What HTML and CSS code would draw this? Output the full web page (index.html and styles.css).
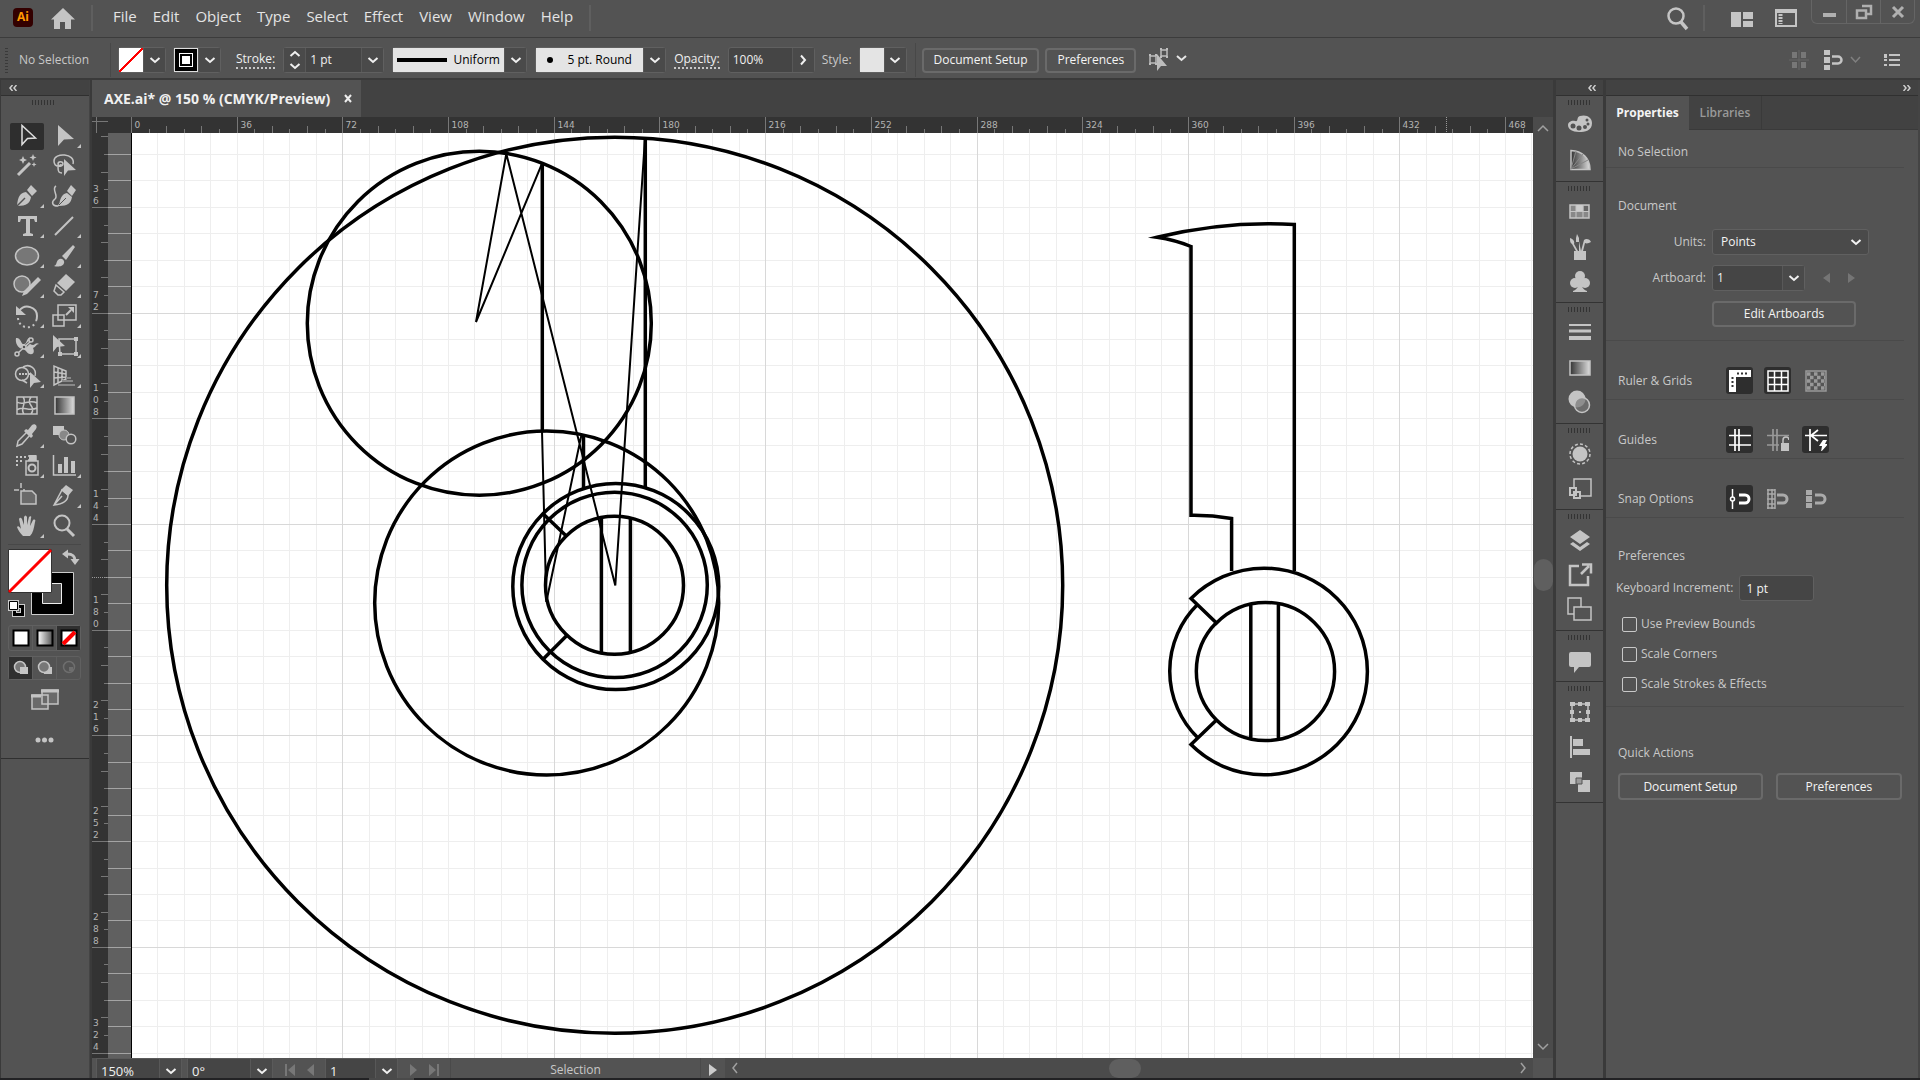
FILE: index.html
```html
<!DOCTYPE html>
<html lang="en">
<head>
<meta charset="utf-8">
<title>AXE.ai - Illustrator</title>
<link rel="stylesheet" href="styles.css">
</head>
<body>
<svg class="defs" width="0" height="0" aria-hidden="true">
  <defs>
    <linearGradient id="fade"><stop offset="0" stop-color="#333"/><stop offset="1" stop-color="#ddd"/></linearGradient>
    <linearGradient id="fade-light"><stop offset="0" stop-color="#fff"/><stop offset="1" stop-color="#555"/></linearGradient>
    <symbol id="down" viewBox="0 0 12 12"><path d="M1.500 4l4.500 4 4.500-4" fill="none" stroke="currentColor" stroke-width="2"/></symbol>
    <symbol id="next" viewBox="0 0 12 12"><path d="M4 1.500l4 4.500-4 4.500" fill="none" stroke="currentColor" stroke-width="2"/></symbol>
    <symbol id="magnet" viewBox="0 0 22 22"><path d="M10 7h6a4 4 0 0 1 0 8H10" fill="none" stroke="currentColor" stroke-width="3"/></symbol>
  </defs>
</svg>
<div class="app">
  <header class="titlebar">
    <span class="logo">Ai</span>
    <button class="icon-btn home" aria-label="Home"><svg width="24" height="22"><path d="M12 0L0 11.500h3V21h6v-7h5v7h6v-9.500h4z" fill="#c4c4c4"/></svg></button>
    <span class="bar"></span>
    <nav class="menu">
      <a href="#">File</a><a href="#">Edit</a><a href="#">Object</a><a href="#">Type</a><a href="#">Select</a><a href="#">Effect</a><a href="#">View</a><a href="#">Window</a><a href="#">Help</a>
    </nav>
    <span class="bar"></span>
    <span class="grow"></span>
    <button class="icon-btn search" aria-label="Search"><svg width="22" height="26"><circle cx="9" cy="11" r="7.500" fill="none" stroke="#c4c4c4" stroke-width="2.500"/><path d="M14 17l6 7" stroke="#c4c4c4" stroke-width="3.500"/></svg></button>
    <span class="bar"></span>
    <button class="icon-btn arrange" aria-label="Arrange documents"><svg width="22" height="15"><path d="M0 0h10v15H0zM12 0h10v7H12zM12 9h10v6H12z" fill="#c4c4c4"/></svg></button>
    <button class="icon-btn switcher" aria-label="Workspace"><svg width="22" height="18"><path d="M1 3v14h20V3z" fill="none" stroke="#c4c4c4" stroke-width="2"/><path d="M0 0h22v3H0z" fill="#c4c4c4"/><path d="M5.500 5v10" stroke="#c4c4c4" stroke-width="4" stroke-dasharray="2 1"/></svg></button>
    <div class="window-btns">
      <button aria-label="Minimize"><svg width="14" height="16"><path d="M1 9h13v4H1z" fill="#b0b0b0"/></svg></button>
      <button aria-label="Restore"><svg width="18" height="16"><path d="M7 2h9v8h-5M2 6.500h9v7.500H2z" fill="none" stroke="#b0b0b0" stroke-width="2.500"/></svg></button>
      <button aria-label="Close"><svg width="14" height="14"><path d="M2 2l10 10M12 2L2 12" stroke="#b0b0b0" stroke-width="3"/></svg></button>
    </div>
  </header>

  <div class="control">
    <span class="vgrip"></span>
    <span class="state">No Selection</span>
    <div class="combo fill"><button class="chip none" aria-label="Fill"></button><button class="drop" aria-label="Fill options"><svg><use href="#down"/></svg></button></div>
    <div class="combo stroke-c"><button class="chip solid" aria-label="Stroke"></button><button class="drop" aria-label="Stroke options"><svg><use href="#down"/></svg></button></div>
    <label class="dotted" for="stroke-w">Stroke:</label>
    <div class="combo weight"><button class="drop step" aria-label="Step"><svg class="spin" viewBox="0 0 12 24"><path d="M1.500 8L6 4l4.500 4M1.500 16L6 20l4.500-4" fill="none" stroke="currentColor" stroke-width="2"/></svg></button><input id="stroke-w" value="1 pt"><button class="drop" aria-label="Weights"><svg><use href="#down"/></svg></button></div>
    <div class="combo"><button class="profile"><span class="sample"></span>Uniform</button><button class="drop" aria-label="Profiles"><svg><use href="#down"/></svg></button></div>
    <div class="combo"><button class="profile brush"><span class="dot"></span>5 pt. Round</button><button class="drop" aria-label="Brushes"><svg><use href="#down"/></svg></button></div>
    <label class="dotted" for="opacity">Opacity:</label>
    <div class="combo opacity"><input id="opacity" value="100%"><button class="drop" aria-label="Opacity options"><svg><use href="#next"/></svg></button></div>
    <span class="style-l">Style:</span>
    <div class="combo"><button class="chip" aria-label="Graphic style"></button><button class="drop" aria-label="Styles"><svg><use href="#down"/></svg></button></div>
    <span class="sep"></span>
    <button class="btn">Document Setup</button>
    <button class="btn">Preferences</button>
    <button class="icon-btn similar" aria-label="Select similar objects"><svg width="42" height="26" fill="none" stroke="#bdbdbd"><path d="M2 9h6v7H2zM13 3h6v6h-6z" stroke-width="1.500"/><path d="M1 8h2M7 8h2M1 17h2M7 17h2M12 2h2M18 2h2M12 10h2M18 10h2" stroke-width="2"/><path d="M9 7v17l4-5h6z" fill="#bdbdbd" stroke="none"/><path d="M29 9l4.500 4L38 9" stroke="#e6e6e6" stroke-width="2"/></svg></button>
    <span class="grow"></span>
    <button class="icon-btn align" aria-label="Align to pixel grid"><svg width="20" height="22" fill="#777"><path d="M3 3h5v6H3zM12 3h5v6h-5zM3 13h5v6H3zM12 13h5v6h-5z"/><path d="M10 1v20M0 11h20" stroke="#666"/></svg></button>
    <button class="icon-btn snap" aria-label="Snap to pixel"><svg width="40" height="22"><path d="M1 1h6v5H1zM1 8h6v6H1zM1 16h6v5H1z" fill="#c4c4c4"/><path d="M9 7.500h6a3.500 3.500 0 0 1 0 7H9" fill="none" stroke="#c4c4c4" stroke-width="2.500"/><path d="M28 8l4.500 5L37 8" fill="none" stroke="#808080" stroke-width="1.500"/></svg></button>
    <button class="icon-btn list" aria-label="Panel menu"><svg width="16" height="14"><path d="M0 2h3M5 2h11M0 7h3M5 7h11M0 12h3M5 12h11M0 4h3" stroke="#c4c4c4" stroke-width="2"/></svg></button>
  </div>

  <main class="work">
    <aside class="tools">
      <div class="collapse"><svg width="8" height="6"><path d="M3.500 0L1 3l2.500 3M7.500 0L5 3l2.500 3" fill="none" stroke="#d0d0d0" stroke-width="1.500"/></svg></div>
      <div class="grip"></div>
      <div class="tool-grid">
        <button class="active" aria-label="Selection"><svg><path d="M8 2.500v19l5.500-6 8-.5z" fill="none" stroke="#e0e0e0" stroke-width="1.500"/></svg></button>
        <button class="more" aria-label="Direct selection"><svg><path d="M7 2v21l6-6.500 10-.5z" fill="currentColor"/></svg></button>
        <button aria-label="Magic wand"><svg><path d="M4 22L16 10" stroke="currentColor" stroke-width="3"/><path d="M9 3l1.200 2.800L13 7l-2.800 1.200L9 11 7.800 8.200 5 7l2.800-1.200zM19 1l1 2.500 2.500 1-2.500 1-1 2.500-1-2.500-2.500-1 2.500-1zM20 9l.7 1.800 1.800.7-1.800.7L20 14l-.7-1.800-1.800-.7 1.800-.7z" fill="currentColor"/></svg></button>
        <button aria-label="Lasso"><svg><path d="M22 11c3-11-19-12-19-3 0 7 9 6 9 3s-5-3-5 0c0 2 3 2 3 0M7 14c0 5 1 6 4 6" fill="none" stroke="currentColor" stroke-width="1.500"/><path d="M13 6v17l4-5.500 8-.5z" fill="currentColor"/></svg></button>
        <button class="more" aria-label="Pen"><svg><path d="M3 23c1-10 3-13 9-14l5 5c-1 6-4 9-14 9zM13 7l4-5 6 6-5 5z" fill="currentColor"/><path d="M3 23l8-8" stroke="#535353" stroke-width="1.500"/></svg></button>
        <button aria-label="Curvature"><svg><path d="M8 23c1-8 3-12 8-13l5 4c-1 6-4 9-13 9zM16 8l4-6 5 5-4 6z" fill="currentColor"/><path d="M5 3c-5 3 3 10-1 13-4 3-3 7 3 7M7 23l8-8" fill="none" stroke="currentColor" stroke-width="1.500"/><path d="M8 22l7-7" stroke="#535353"/></svg></button>
        <button class="more" aria-label="Type"><svg><path d="M4 3h19v6h-2l-1-3h-4v14l3 1v2H9v-2l3-1V6H7L6 9H4z" fill="currentColor"/></svg></button>
        <button class="more" aria-label="Line"><svg><path d="M4 22L22 4" stroke="currentColor" stroke-width="2"/></svg></button>
        <button class="more" aria-label="Ellipse"><svg><ellipse cx="13" cy="13" rx="11.500" ry="9" fill="#777" stroke="currentColor" stroke-width="1.500"/></svg></button>
        <button class="more" aria-label="Paintbrush"><svg><path d="M11 13L22 2l2 2-9 13zM3 23c3-1 2-4 4-6 3-3 7 0 6 3-1 4-7 4-10 3z" fill="currentColor"/></svg></button>
        <button class="more" aria-label="Shaper"><svg><circle cx="8" cy="11" r="8" fill="#777" stroke="currentColor" stroke-width="1.500"/><path d="M24 4l3 3-14 14-5 2 2-5z" fill="currentColor"/></svg></button>
        <button class="more" aria-label="Eraser"><svg><path d="M15 1l9 8-9 9-9-8z" fill="currentColor"/><path d="M5 12l8 7-3 3H7l-4-4z" fill="none" stroke="currentColor" stroke-width="1.500"/></svg></button>
        <button class="more" aria-label="Rotate"><svg><path d="M5 8c6-8 18-4 18 5 0 2 0 3-1 5" fill="none" stroke="currentColor" stroke-width="2"/><path d="M2 3v9h10z" fill="currentColor"/><path d="M4 15c1 11 14 12 18 4" fill="none" stroke="currentColor" stroke-width="2" stroke-dasharray="2 3"/></svg></button>
        <button class="more" aria-label="Scale"><svg><path d="M7 2h18v15H7zM2 12h11v11H2z" fill="none" stroke="currentColor" stroke-width="1.500"/><path d="M15 12l5-5" stroke="currentColor" stroke-width="2"/><path d="M17 4h6v6z" fill="currentColor"/></svg></button>
        <button class="more" aria-label="Width"><svg><path d="M2 5c5-1 5 7 8 6 3 0 2-5 6-7-2 5 0 8 3 8 2 0 3-3 6-1-3 0-3 3-6 4 2 4 0 7-3 6-3 0-4-5-8-5-4-1-7-6-6-11z" fill="currentColor"/><path d="M3 21L18 7" stroke="#535353" stroke-width="3"/><path d="M4 20L17 8" stroke="currentColor" stroke-width="1.500"/><g fill="#535353" stroke="currentColor" stroke-width="1.500"><circle cx="3" cy="21" r="2"/><circle cx="17" cy="7" r="2"/><circle cx="10" cy="14" r="2"/></g></svg></button>
        <button class="more" aria-label="Free transform"><svg><path d="M8 6h17v15H9z" fill="none" stroke="currentColor" stroke-width="1.500"/><path d="M23 4h4v4h-4zM23 19h4v4h-4zM7 19h4v4H7z" fill="currentColor"/><path d="M2 2v17l4-5 8-1z" fill="currentColor"/></svg></button>
        <button class="more" aria-label="Shape builder"><svg><circle cx="8" cy="11" r="6.500" fill="none" stroke="currentColor" stroke-width="1.500"/><path d="M9 4c7-4 14 2 12 9M8 17l5 3" fill="none" stroke="currentColor" stroke-width="1.500"/><path d="M5 11h12" stroke="currentColor" stroke-width="2" stroke-dasharray="2 1"/><path d="M16 9v16l4-5 7-1z" fill="currentColor"/></svg></button>
        <button class="more" aria-label="Perspective grid"><svg><path d="M3 3v19l12-6V8zM7 5v15M11 7v11M3 9l12 2M3 15l12-1" fill="none" stroke="currentColor" stroke-width="1.500"/><path d="M15 15h5M11 18h11M7 22h17" stroke="#888" stroke-width="2"/></svg></button>
        <button aria-label="Mesh"><svg><path d="M3 4h20v17H3zM3 9c6 4 12-3 20 1M3 17c5-5 12 2 20-2M9 4c5 6-4 11 1 17M17 4c-6 8 6 9 0 17" fill="none" stroke="currentColor" stroke-width="1.500"/></svg></button>
        <button aria-label="Gradient"><svg><path d="M4 4h19v17H4z" fill="url(#fade)" stroke="currentColor" stroke-width="1.500"/></svg></button>
        <button class="more" aria-label="Eyedropper"><svg><path d="M14 7l4-5c3-2 6 1 4 4l-4 5 1 2-2 2-7-7 2-2z" fill="currentColor"/><path d="M13 9L4 18l-1 5 5-2 8-9" fill="none" stroke="currentColor" stroke-width="1.500"/></svg></button>
        <button aria-label="Blend"><svg><path d="M2 3h11v9H2z" fill="currentColor"/><circle cx="13" cy="12" r="5" fill="#888" stroke="currentColor"/><circle cx="20" cy="16" r="4.800" fill="#535353" stroke="currentColor" stroke-width="1.500"/></svg></button>
        <button class="more" aria-label="Symbol sprayer"><svg><path d="M12 8h12v14H12zM14 3h8v4h-8" fill="none" stroke="currentColor" stroke-width="1.500"/><path d="M15 2h7v5h-7z" fill="currentColor"/><circle cx="18" cy="15" r="3.500" fill="none" stroke="currentColor" stroke-width="2"/><path d="M2 4h10M2 8h8M2 12h4" stroke="currentColor" stroke-width="2" stroke-dasharray="2 2"/></svg></button>
        <button class="more" aria-label="Column graph"><svg><path d="M2.500 2v20H25" fill="none" stroke="currentColor" stroke-width="1.500"/><path d="M7 11h4v9H7zM13 4h4v16h-4zM20 8h4v12h-4z" fill="currentColor"/></svg></button>
        <button aria-label="Artboard"><svg><path d="M7 8h11l4 4v9H7z" fill="#6a6a6a" stroke="currentColor" stroke-width="1.500"/><path d="M0 7h5M7 0v5M9 7h2" stroke="currentColor" stroke-width="1.500"/></svg></button>
        <button class="more" aria-label="Slice"><svg><path d="M3 22l8-15 6 5c0 5-4 9-14 10zM3 22l8-9" fill="none" stroke="currentColor" stroke-width="1.500"/><path d="M15 2l7 5-5 6-7-6z" fill="currentColor"/></svg></button>
        <button class="more" aria-label="Hand"><svg><path d="M9 23c-3-3-5-6-6-9 1-2 3 0 4 2L5 6c1-2 2-1 3 0l2 6V4c1-2 2-2 3 0v8l2-8c1-1 3-1 2 1l-1 8 3-6c2-1 3 0 2 2-1 6-2 11-5 14z" fill="currentColor"/></svg></button>
        <button aria-label="Zoom"><svg><circle cx="11" cy="10" r="7.500" fill="none" stroke="currentColor" stroke-width="2"/><path d="M16 16l7 7" stroke="currentColor" stroke-width="3"/></svg></button>
      </div>
      <div class="swatches">
        <svg width="74" height="72">
          <path d="M23.500 23.500h42v42h-42z" fill="#000" stroke="#ccc"/><path d="M34.500 34.500h19v20h-19z" fill="#535353" stroke="#eee"/>
          <path d="M.5.500h43v43H.5z" fill="#fff" stroke="#333"/><path d="M1 43L43 1" stroke="#f00" stroke-width="3"/>
          <path d="M59 5c6 0 8 2 8 7" fill="none" stroke="#c4c4c4" stroke-width="3"/><path d="M54 5l6-4.500v9zM62.500 10h9L67 16z" fill="#c4c4c4"/>
          <path d="M6.500 57.500h8v8h-8z" fill="none" stroke="#ccc" stroke-width="5"/><path d="M6.500 57.500h8v8h-8z" fill="none" stroke="#000" stroke-width="3"/><path d="M1.500 52.500h8v8h-8z" fill="#fff" stroke="#ccc" stroke-width="3"/><path d="M1.500 52.500h8v8h-8z" fill="#fff" stroke="#000"/>
        </svg>
      </div>
      <div class="seg">
        <button aria-label="Color"><svg width="18" height="18"><path d="M1.500 1.500h15v15h-15z" fill="#fff" stroke="#000" stroke-width="2"/></svg></button>
        <button aria-label="Gradient fill"><svg width="18" height="18"><path d="M1.500 1.500h15v15h-15z" fill="url(#fade-light)" stroke="#000" stroke-width="2"/></svg></button>
        <button class="on" aria-label="None"><svg width="18" height="18"><path d="M1.500 1.500h15v15h-15z" fill="#fff" stroke="#000" stroke-width="2"/><path d="M3 15L15 3" stroke="#f00" stroke-width="4"/></svg></button>
      </div>
      <div class="seg modes">
        <button class="on" aria-label="Draw normal"><svg width="16" height="16"><circle cx="7" cy="7" r="5.500" fill="#777" stroke="#c4c4c4" stroke-width="1.500"/><path d="M7 7h8v7H7z" fill="#c4c4c4"/></svg></button>
        <button aria-label="Draw behind"><svg width="16" height="16"><path d="M7 7h8v7H7z" fill="#c4c4c4"/><circle cx="7" cy="7" r="5.500" fill="#777" stroke="#c4c4c4" stroke-width="1.500"/></svg></button>
        <button aria-label="Draw inside"><svg width="16" height="16"><circle cx="8" cy="7" r="5.500" fill="none" stroke="#6e6e6e" stroke-width="1.500"/><path d="M8 7h4v4H8z" fill="#6e6e6e"/></svg></button>
      </div>
      <button class="icon-btn screen" aria-label="Screen mode"><svg width="29" height="22"><path d="M1 6h16v14H1zM11 1h16v14H11z" fill="#6a6a6a" stroke="#c4c4c4" stroke-width="1.500"/><path d="M0 7h10M10 2h18" stroke="#c4c4c4" stroke-width="3"/></svg></button>
      <button class="icon-btn dots" aria-label="Edit toolbar"><svg width="19" height="6" fill="#c4c4c4"><circle cx="3" cy="3" r="2.500"/><circle cx="9.500" cy="3" r="2.500"/><circle cx="16" cy="3" r="2.500"/></svg></button>
      <hr>
    </aside>

    <section class="doc">
      <div class="tabs"><div class="tab"><span>AXE.ai* @ 150 % (CMYK/Preview)</span><button class="close" aria-label="Close document"><svg width="8" height="9"><path d="M1 1l6 7M7 1L1 8" stroke="#eee" stroke-width="2"/></svg></button></div></div>
      <div class="view">
        <svg class="corner"><path d="M0 4.500h16M4.500 0v16" stroke="#777"/></svg>
        <svg class="ruler" id="ruler-x"></svg>
        <svg class="ruler" id="ruler-y"></svg>
        <svg class="canvas">
          <rect x="24" y="0" width="100%" height="100%" fill="#fff"/>
          <g id="grid" shape-rendering="crispEdges"></g>
          <path d="M23.500 0v2000" stroke="#000"/>
          <g transform="translate(-108 -133)" fill="none" stroke="#000" stroke-width="3.500" stroke-miterlimit="10">
            <circle cx="614.700" cy="585.200" r="448"/>
            <circle cx="479.300" cy="323.300" r="172"/>
            <circle cx="546.700" cy="603" r="172"/>
            <circle cx="615.800" cy="586.500" r="103"/>
            <circle cx="614.600" cy="584.900" r="92.700"/>
            <circle cx="614.500" cy="585.200" r="69"/>
            <path d="M542.300 163.500V431M645.300 138v349.500M583.500 434.500v54M601.400 518v134M630.400 518v134"/>
            <path d="M543.300 514l23 22M543.300 659l23-23"/>
            <path d="M542 163.600L476 322l30.300-168.300L615.300 585.400 645 138.500M542 431l4.300 171 35.200-167.400" stroke-width="2" stroke-linejoin="bevel"/>
            <path d="M1231.600 571v-52.500Q1211 515 1191 515.300V246.500Q1175 240 1157 237.300 1226 220.500 1294.300 224.500V571"/>
            <path d="M1191 598.500a103.300 103.300 0 1 1 0 146l25.500-24.500a69 69 0 1 0 0-97zM1197.500 604.500a93.500 93.500 0 0 0 0 133M1216.500 622.500a69 69 0 0 0 0 97.500M1250.800 603v136M1278.400 603v136"/>
          </g>
        </svg>
        <div class="vscroll"><svg width="12" height="12"><path d="M1 9l5-5 5 5" fill="none" stroke="#a0a0a0" stroke-width="1.500"/></svg><span class="thumb"></span><svg width="12" height="12"><path d="M1 3l5 5 5-5" fill="none" stroke="#a0a0a0" stroke-width="1.500"/></svg></div>
      </div>
      <div class="status">
        <div class="combo zoom"><input aria-label="Zoom" value="150%"><button class="drop" aria-label="Zoom levels"><svg><use href="#down"/></svg></button></div>
        <div class="combo zoom"><input aria-label="Rotate view" value="0°"><button class="drop" aria-label="Rotations"><svg><use href="#down"/></svg></button></div>
        <div class="nav"><button class="icon-btn" aria-label="First"><svg width="12" height="12"><path d="M1 0h2v12H1zM11 0v12L4 6z" fill="#777"/></svg></button><button class="icon-btn" aria-label="Previous"><svg width="8" height="12"><path d="M7 0v12L0 6z" fill="#777"/></svg></button></div>
        <div class="combo page"><input aria-label="Artboard number" value="1"><button class="drop" aria-label="Artboards"><svg><use href="#down"/></svg></button></div>
        <div class="nav"><button class="icon-btn" aria-label="Next"><svg width="8" height="12"><path d="M1 0v12l7-6z" fill="#777"/></svg></button><button class="icon-btn" aria-label="Last"><svg width="12" height="12"><path d="M9 0h2v12H9zM1 0v12l7-6z" fill="#777"/></svg></button></div>
        <span class="tool-name">Selection</span>
        <button class="icon-btn play" aria-label="Status menu"><svg width="8" height="12"><path d="M0 0v12l8-6z" fill="#ccc"/></svg></button>
        <div class="hscroll"><svg width="12" height="12"><path d="M8 1L4 6l4 5" fill="none" stroke="#a0a0a0" stroke-width="1.500"/></svg><span class="thumb"></span><svg width="12" height="12"><path d="M4 1l4 5-4 5" fill="none" stroke="#a0a0a0" stroke-width="1.500"/></svg></div>
      </div>
    </section>

    <aside class="dock">
      <div class="collapse"><svg width="8" height="6"><path d="M3.500 0L1 3l2.500 3M7.500 0L5 3l2.500 3" fill="none" stroke="#d0d0d0" stroke-width="1.500"/></svg></div>
      <div class="group">
        <button aria-label="Color"><svg><path d="M13 3c7-2 12 2 12 7 0 8-7 9-13 9C5 19 1 16 1 12c0-3 4-5 7-4 4 1 1-4 5-5z" fill="currentColor"/><g fill="#535353"><circle cx="6" cy="13" r="2.500"/><circle cx="12" cy="15" r="2.500"/><circle cx="18" cy="14" r="2"/><circle cx="21" cy="11" r="1.500"/><circle cx="20" cy="7" r="1.500"/></g></svg></button>
        <button aria-label="Color guide"><svg><path d="M4 2.500v19h19C23 10 15 3 4 2.500z" fill="url(#fade)" stroke="currentColor" stroke-width="1.500"/><path d="M4 21L9 3M4 21l12-15M4 21l17-9" stroke="#888"/></svg></button>
      </div>
      <div class="group">
        <button aria-label="Swatches"><svg><path d="M3 6h19v13H3z" fill="#888" stroke="currentColor" stroke-width="1.500"/><path d="M9 6h7v6H9z" fill="#ccc"/><path d="M9 6v13M16 6v13M3 12.500h19" stroke="currentColor"/><path d="M17 7h4v5h-4z" fill="#666"/></svg></button>
        <button aria-label="Brushes"><svg><path d="M7 17h12v9H7zM10 0l2 4v4h-3V4zM3 4c3 1 5 3 4 6l4 7H9L5 10c-2-1-2-3-2-6zM12 7l2 10h-2zM17 6c2-2 6-1 7 2-2 1-4 2-6 1l-2 8h-2z" fill="currentColor"/></svg></button>
        <button aria-label="Symbols"><svg><circle cx="13" cy="7" r="5" fill="currentColor"/><circle cx="8" cy="14" r="5" fill="currentColor"/><circle cx="18" cy="14" r="5" fill="currentColor"/><path d="M12 9h2c0 8 1 11 6 13v1H6v-1c5-2 6-5 6-13z" fill="currentColor"/></svg></button>
      </div>
      <div class="group">
        <button aria-label="Stroke"><svg><path d="M2 5h22" stroke="currentColor" stroke-width="2"/><path d="M2 11h22" stroke="currentColor" stroke-width="3"/><path d="M2 18h22" stroke="currentColor" stroke-width="4"/></svg></button>
        <button aria-label="Gradient panel"><svg><path d="M3 6h20v14H3z" fill="url(#fade)" stroke="currentColor" stroke-width="1.500"/></svg></button>
        <button aria-label="Transparency"><svg><circle cx="10" cy="9" r="8.500" fill="currentColor"/><circle cx="15" cy="15" r="7.500" fill="#777" fill-opacity=".7" stroke="currentColor" stroke-width="1.500"/></svg></button>
      </div>
      <div class="group">
        <button aria-label="Appearance"><svg><circle cx="13" cy="13" r="7.500" fill="currentColor"/><circle cx="13" cy="13" r="10" fill="none" stroke="currentColor" stroke-width="1.500" stroke-dasharray="3 2.200"/></svg></button>
        <button aria-label="Graphic styles"><svg><path d="M7 11V3h17v17H12" fill="none" stroke="currentColor" stroke-width="1.500"/><path d="M3 12h6v7H3zM7 16h6v6H7z" fill="none" stroke="currentColor" stroke-width="2"/></svg></button>
      </div>
      <div class="group">
        <button aria-label="Layers"><svg><path d="M13 3l10 7-10 7-10-7zM3 17l3-2 7 5 7-5 3 2-10 7z" fill="currentColor"/></svg></button>
        <button aria-label="Asset export"><svg><path d="M12 4H3v19h18v-9" fill="none" stroke="currentColor" stroke-width="2.500"/><path d="M14 12l8-8M15 2.500h9v9" fill="none" stroke="currentColor" stroke-width="2.500"/></svg></button>
        <button aria-label="Artboards"><svg><path d="M7 17H1V1h13v9M7 10h17v13H7z" fill="none" stroke="currentColor" stroke-width="1.500"/></svg></button>
      </div>
      <div class="group">
        <button aria-label="Comments"><svg><path d="M4 4h18q2 0 2 2v11q0 2-2 2H12l-5 6v-6H4q-2 0-2-2V6q0-2 2-2z" fill="currentColor"/></svg></button>
      </div>
      <div class="group">
        <button aria-label="Transform"><svg><path d="M5 5h16v16H5z" fill="none" stroke="currentColor" stroke-width="1.500"/><path d="M3 3h5v4H3zM11 3h4v4h-4zM18 3h5v4h-5zM3 11h4v4H3zM19 11h4v4h-4zM3 19h5v4H3zM11 19h4v4h-4zM18 19h5v4h-5zM12 12h2v2h-2z" fill="currentColor"/></svg></button>
        <button aria-label="Align"><svg><path d="M4 2v22" stroke="currentColor" stroke-width="2"/><path d="M6 5h10v7H6zM6 15h17v6H6z" fill="currentColor"/></svg></button>
        <button aria-label="Pathfinder"><svg><path d="M3 3h12v12H3zM11 11h12v12H11z" fill="currentColor"/><path d="M9 9h6v6H9z" fill="#999" stroke="#535353"/></svg></button>
      </div>
    </aside>

    <aside class="props">
      <div class="collapse"><svg width="8" height="6"><path d="M.5 0L3 3 .5 6M4.500 0L7 3 4.500 6" fill="none" stroke="#d0d0d0" stroke-width="1.500"/></svg></div>
      <div class="ptabs"><button class="current">Properties</button><button>Libraries</button></div>
      <div class="pbody">
        <section class="sel">No Selection</section>
        <section class="document">
          <h2>Document</h2>
          <div class="row"><label for="units">Units:</label><div class="select"><select id="units"><option>Points</option></select><svg><use href="#down"/></svg></div></div>
          <div class="row"><label for="artboard">Artboard:</label><div class="combo board"><input id="artboard" value="1"><button class="drop" aria-label="Artboard list"><svg><use href="#down"/></svg></button></div><button class="icon-btn arrow" aria-label="Previous artboard"><svg width="7" height="10"><path d="M7 0v10L0 5z" fill="#757575"/></svg></button><button class="icon-btn arrow" aria-label="Next artboard"><svg width="7" height="10"><path d="M0 0v10l7-5z" fill="#757575"/></svg></button></div>
          <div class="row"><span class="label"></span><button class="btn edit">Edit Artboards</button></div>
        </section>
        <section class="toggles"><span>Ruler &amp; Grids</span>
          <button class="on" aria-label="Rulers"><svg><path d="M0 0h22v7H7v15H0z" fill="#fff"/><path d="M8 3.500h12M3.500 7v12" stroke="#333" stroke-width="2" stroke-dasharray="2 2"/></svg></button>
          <button class="on" aria-label="Grid"><svg><path d="M1 1h20v20H1zM7.500 1v20M14.500 1v20M1 7.500h20M1 14.500h20" fill="none" stroke="#fff" stroke-width="1.500"/></svg></button>
          <button aria-label="Transparency grid"><svg><path d="M1 1h20v20H1z" fill="#555" stroke="#999" stroke-width="1.500"/><path d="M2 4h18M2 11h18M2 18h18" stroke="#999" stroke-width="3.500" stroke-dasharray="3.500 3.500"/><path d="M5 7.500h15M5 14.500h15" stroke="#999" stroke-width="3.500" stroke-dasharray="3.500 3.500"/></svg></button>
        </section>
        <section class="toggles"><span>Guides</span>
          <button class="on" aria-label="Show guides"><svg><path d="M6 0v22M10 0v22M0 6.500h22M0 16h22" stroke="#fff" stroke-width="1.700"/></svg></button>
          <button aria-label="Lock guides"><svg><path d="M6 0v22M10 0v22M0 6.500h22M0 16h12" stroke="#999" stroke-width="1.700"/><path d="M14 14h10v8H14z" fill="#c4c4c4"/><path d="M16 14v-3a3 3 0 0 1 6 0" fill="none" stroke="#c4c4c4" stroke-width="1.500"/></svg></button>
          <button class="on" aria-label="Smart guides"><svg><path d="M5 0v22M0 6.500h22M13 1L6 6.500 13 12" fill="none" stroke="#fff" stroke-width="1.700"/><path d="M18 11h4l-2 4h3l-7 8 1-6h-3z" fill="#fff"/></svg></button>
        </section>
        <section class="toggles"><span>Snap Options</span>
          <button class="on" aria-label="Snap to point"><svg><path d="M3.500 1v20" stroke="#fff" stroke-width="1.500"/><circle cx="3.500" cy="11" r="2" fill="#333" stroke="#fff" stroke-width="1.500"/><g color="#fff"><use href="#magnet"/></g></svg></button>
          <button aria-label="Snap to grid"><svg><path d="M1 1v20M5 1v20M8 1v20M0 2h8M0 6h8M0 11h8M0 16h8M0 20h8" stroke="#aaa" stroke-width="1.500"/><g color="#aaa"><use href="#magnet"/></g></svg></button>
          <button aria-label="Snap pixels"><svg><path d="M1 2h6v5H1zM1 8h6v6H1zM1 15h6v5H1z" fill="#aaa"/><g color="#aaa"><use href="#magnet"/></g></svg></button>
        </section>
        <section class="prefs">
          <h2>Preferences</h2>
          <div class="key"><label for="inc">Keyboard Increment:</label><input id="inc" value="1 pt"></div>
          <label class="check"><input type="checkbox">Use Preview Bounds</label>
          <label class="check"><input type="checkbox">Scale Corners</label>
          <label class="check"><input type="checkbox">Scale Strokes &amp; Effects</label>
        </section>
        <section class="quick">
          <h2>Quick Actions</h2>
          <div class="quick-row"><button class="btn">Document Setup</button><button class="btn">Preferences</button></div>
        </section>
      </div>
    </aside>
  </main>
  <footer class="strip"><span></span></footer>
</div>
<script src="script.js"></script>
</body>
</html>
```
FILE: styles.css
```css
* { box-sizing: border-box; }
body { margin: 0; background: #535353; color: #c8c8c8; font: 12px/20px "Open Sans", "Noto Sans", sans-serif; }
button, input, select { font: inherit; color: inherit; margin: 0; padding: 0; border: 0; background: none; border-radius: 0; outline: 0; }
button { display: flex; align-items: center; justify-content: center; flex: none; }
svg { display: block; flex: none; }
.defs { position: absolute; }
.grow { flex: 1; }
.app { height: 100vh; display: flex; flex-direction: column; overflow: hidden; }

.titlebar { flex: none; height: 38px; display: flex; align-items: center; border-bottom: 1px solid #3c3c3c; padding: 0 5px 2px 13px; }
.logo { width: 20px; height: 19px; border-radius: 4px; background: #330000; color: #ff9a00; font-weight: 700; font-size: 12px; line-height: 18px; text-align: center; }
.home { margin: 2px 16px 0 18px; }
.bar { width: 2px; height: 26px; background: #5f5f5f; }
.menu { display: flex; gap: 16px; margin: 0 16px 3px 20px; }
.menu a { color: #e4e4e4; text-decoration: none; font-size: 15px; }
.search { margin-right: 14px; }
.arrange { margin: 4px 22px 0 26px; }
.switcher { margin-right: 14px; }
.window-btns { align-self: flex-start; display: flex; height: 24px; border: 1px solid #656565; border-top: 0; border-radius: 0 0 6px 6px; }
.window-btns button { width: 34px; border-left: 1px solid #656565; }
.window-btns button:first-child { border-left: 0; }

.control { flex: none; height: 42px; display: flex; align-items: center; padding: 4px 20px 0 5px; border-bottom: 2px solid #3a3a3a; }
.vgrip { width: 3px; height: 25px; background: repeating-linear-gradient(#3a3a3a 0 1px, #535353 1px 3px); }
.state { margin-left: 11px; width: 92px; height: 34px; line-height: 34px; border-right: 1px solid #484848; }
.combo { display: flex; flex: none; height: 26px; border: 1px solid #606060; border-radius: 3px; background: #454545; color: #f0f0f0; }
.combo input { width: 55px; padding-left: 4px; min-width: 0; }
.combo .drop { width: 22px; border-left: 1px solid #585858; background: #4a4a4a; }
.combo .step { border-left: 0; border-right: 1px solid #585858; }
.drop svg, .select svg { width: 12px; height: 12px; }
.drop .spin { height: 24px; }
.control .combo { margin-right: 8px; }
.chip { width: 24px; background: #e4e4e4; }
.none { background: linear-gradient(135deg, #fff 46%, #f00 47% 53%, #fff 54%); }
.solid { background: #000; border: 1px solid #ddd; }
.solid::after { content: ""; width: 8px; height: 8px; background: #fff; border: 2px solid #000; outline: 1px solid #fff; }
.control .fill { margin-left: 7px; margin-right: 7px; }
.control .stroke-c { margin-right: 15px; }
.dotted { border-bottom: 2px dotted #c8c8c8; line-height: 16px; color: #f0f0f0; margin-right: 8px; }
.profile { width: 111px; background: #e4e4e4; color: #000; }
.profile .sample { width: 50px; height: 4px; background: #000; margin-right: 6px; }
.profile.brush { width: 107px; }
.dot { width: 6px; height: 6px; border-radius: 50%; background: #000; margin-right: 14px; }
.control .opacity { margin-right: 7px; }
.opacity input { width: 63px; }
.style-l { margin-right: 7px; }
.sep { width: 1px; height: 34px; background: #484848; margin-right: 6px; }
.btn { height: 26px; border: 2px solid #6a6a6a; border-radius: 4px; color: #f4f4f4; padding: 0 10px; }
.control .btn { height: 25px; margin-right: 6px; }
.similar { margin-left: 6px; }
.align { margin-right: 14px; }
.snap { margin-right: 21px; }

.work { flex: 1; min-height: 0; display: flex; background: #3a3a3a; }
.collapse { height: 15px; background: #424242; border-bottom: 1px solid #303030; display: flex; align-items: center; flex: none; box-sizing: content-box; }
.tools { width: 90px; flex: none; border-left: 1px solid #3a3a3a; background: #535353; border-right: 1px solid #444; margin-right: 2px; }
.tools .collapse { padding-left: 8px; }
.grip { height: 5px; width: 24px; margin: 4px auto 16px 31px; background: repeating-linear-gradient(90deg, #333 0 1px, #535353 1px 3px); }
.tool-grid { display: grid; grid-template-columns: 37px 37px; margin-left: 7px; padding-bottom: 3px; margin-right: 8px; border-bottom: 1px solid #484848; }
.tool-grid button { height: 30px; color: #c4c4c4; position: relative; }
.tool-grid svg, .group svg { width: 26px; height: 26px; overflow: visible; }
.tool-grid .active::before { content: ""; position: absolute; inset: 2px 1px 1px 2px; background: #2e2e2e; border-radius: 2px; }
.tool-grid .active svg { position: relative; }
.tool-grid .more::after { content: ""; position: absolute; right: 1px; bottom: 3px; border: 2px solid #c4c4c4; border-top-color: transparent; border-left-color: transparent; }
.swatches { margin: 4px 0 0 7px; }
.seg { display: flex; margin: 4px 8px 5px 7px; height: 26px; border: 1px solid #606060; border-radius: 3px; }
.seg button { flex: 1; border-left: 1px solid #5e5e5e; }
.seg button:first-child { border-left: 0; }
.seg .on { background: #303030; }
.modes { height: 24px; }
.screen { margin: 9px auto 0 30px; }
.dots { margin: 26px auto 15px 34px; }
.tools hr { margin: 0; border: 0; border-top: 1px solid #303030; }

.doc { flex: 1; min-width: 0; display: flex; flex-direction: column; border-right: 2px solid #3a3a3a; }
.tabs { height: 37px; background: #424242; display: flex; flex: none; }
.tab { display: flex; align-items: center; gap: 14px; background: #535353; padding: 0 9px 0 12px; color: #f0f0f0; font-weight: 700; font-size: 14px; }
.view { flex: 1; min-height: 0; display: grid; grid-template: 16px 1fr / 16px 1fr 20px; }
.view > svg { width: 100%; height: 100%; min-width: 0; min-height: 0; overflow: hidden; }
.corner, .ruler { background: #333; }
.ruler text { fill: #b4b4b4; font: 9px "DejaVu Sans", sans-serif; }
.canvas { background: #606060; }
.vscroll { grid-column: 3; grid-row: 1 / 3; background: #4b4b4b; display: flex; flex-direction: column; align-items: center; justify-content: space-between; padding: 5px 0; }
.thumb { background: #5f5f5f; border-radius: 10px; }
.vscroll .thumb { width: 19px; height: 32px; margin-bottom: 26px; }
.status { height: 20px; display: flex; align-items: center; background: #535353; padding: 0 20px 0 4px; flex: none; }
.status .combo { height: 20px; border-color: #5a5a5a; border-radius: 0; margin-right: 5px; border-bottom: 0; }
.status .drop svg, .status input { margin-top: 4px; }
.zoom input { width: 62px; font-size: 13px; }
.page input { width: 49px; font-size: 13px; }
.nav { display: flex; gap: 11px; width: 47px; padding: 4px 0 0 6px; }
.tool-name { width: 251px; border: solid #4a4a4a; border-width: 0 1px; text-align: center; padding-top: 4px; height: 20px; line-height: 16px; }
.play { margin: 4px 8px 0; }
.hscroll { flex: 1; align-self: stretch; background: #4b4b4b; display: flex; align-items: center; justify-content: space-between; padding: 0 4px; }
.hscroll .thumb { width: 32px; height: 19px; margin-right: 8px; }

.dock { width: 47px; flex: none; background: #535353; margin: 0 3px 0 1px; }
.dock .collapse { justify-content: flex-end; padding-right: 7px; }
.group { padding: 12px 0 3px; border-bottom: 1px solid #333; position: relative; }
.group::before { content: ""; position: absolute; left: 12px; top: 4px; width: 24px; height: 5px; background: repeating-linear-gradient(90deg, #333 0 1px, #535353 1px 3px); }
.group button { width: 100%; height: 35px; color: #c4c4c4; }

.props { width: 314px; flex: none; background: #535353; border-right: 2px solid #444; }
.props .collapse { justify-content: flex-end; padding-right: 7px; }
.ptabs { display: flex; height: 34px; background: #424242; border-bottom: 1px solid #3a3a3a; }
.ptabs button { width: 73px; height: 33px; color: #999; font-weight: 600; border-right: 1px solid #3a3a3a; }
.ptabs .current { width: 83px; height: 34px; background: #535353; color: #f4f4f4; font-weight: 700; border: 0; }
.pbody { margin-right: 14px; }
.pbody section { border-bottom: 1px solid #4a4a4a; padding-left: 12px; }
.pbody .sel { padding-top: 12px; padding-bottom: 5px; }
h2 { font: inherit; margin: 0; }
.pbody .document { padding-top: 28px; padding-bottom: 13px; }
.document h2 { margin-bottom: 13px; }
.row { display: flex; align-items: center; margin-bottom: 10px; height: 26px; }
.row:last-child { margin-bottom: 0; }
.row > label, .label { width: 88px; text-align: right; margin-right: 6px; }
.select { width: 157px; height: 26px; display: grid; grid-template-columns: 1fr 24px; align-items: center; border: 1px solid #606060; border-radius: 3px; background: #4a4a4a; }
.select select { appearance: none; grid-area: 1 / 1 / 2 / 3; padding-left: 8px; color: #f4f4f4; height: 24px; }
.select svg { grid-area: 1 / 2; justify-self: center; color: #f4f4f4; }
.board input { width: 69px; }
.arrow { margin-left: 18px; }
.edit { width: 144px; }
.pbody .toggles { display: flex; align-items: center; padding-top: 26px; padding-bottom: 5px; }
.toggles span { width: 108px; }
.toggles button { width: 27px; height: 27px; margin-right: 11px; border-radius: 3px; }
.toggles svg { width: 22px; height: 22px; }
.toggles .on { background: #2e2e2e; }
.pbody .prefs { padding-top: 28px; padding-bottom: 7px; }
.prefs h2 { margin-bottom: 9px; }
.key { display: flex; align-items: center; gap: 6px; margin: 0 0 8px -2px; }
.key input { width: 75px; height: 26px; border: 1px solid #606060; border-radius: 3px; background: #454545; color: #f4f4f4; padding-left: 6px; }
.check { display: flex; align-items: center; gap: 4px; height: 30px; margin-left: 4px; }
.check input { appearance: none; width: 15px; height: 15px; border: 1px solid #c8c8c8; border-radius: 2px; }
.pbody .quick { border: 0; padding-top: 36px; }
.quick h2 { margin-bottom: 10px; }
.quick-row { display: flex; gap: 13px; margin-right: 2px; }
.quick-row .btn { height: 27px; flex: 145 1 0; padding: 0; }
.quick-row .btn + .btn { flex-grow: 126; }

.strip { flex: none; height: 2px; background: #222224; padding-left: 369px; }
.strip span { display: block; width: 45px; height: 2px; background: #4a4a4a; }
```
FILE: script.js
```js
const NS = "http://www.w3.org/2000/svg";
const STEP = 105.7;
const ZERO_X = 23.4;
const ZERO_Y = -31.3;

function line(parent, x1, y1, x2, y2, color, dash) {
  const el = document.createElementNS(NS, "line");
  const a = { x1, y1, x2, y2, stroke: color };
  if (dash) a["stroke-dasharray"] = dash;
  for (const k in a) el.setAttribute(k, a[k]);
  parent.appendChild(el);
}

function text(parent, x, y, value) {
  const el = document.createElementNS(NS, "text");
  el.setAttribute("x", x);
  el.setAttribute("y", y);
  el.textContent = value;
  parent.appendChild(el);
}

const half = v => Math.floor(v) + 0.5;
const start = i => i % 6 === 0 ? 0 : i % 2 === 0 ? 9 : 12;

const rx = document.getElementById("ruler-x");
const ry = document.getElementById("ruler-y");
const grid = document.getElementById("grid");
const width = rx.getBoundingClientRect().width;
const height = ry.getBoundingClientRect().height;

for (let i = 0; ZERO_X + i * STEP / 6 < width; i++) {
  const x = half(ZERO_X + i * STEP / 6);
  line(rx, x, start(i), x, 16, "#777");
  if (i % 6 === 0 && x + 22 < width) text(rx, x + 3, 11, String(i * 6));
}
line(rx, 1338.5, 0, 1338.5, 16, "#999", "1 1");

for (let i = 0; ZERO_Y + i * STEP / 6 < height; i++) {
  const y = half(ZERO_Y + i * STEP / 6);
  line(ry, start(i), y, 16, y, "#777");
  if (i % 6 === 0 && i > 0) {
    const digits = String(i * 6);
    [...digits].forEach((d, n) => text(ry, 1, y - 4 - 12 * (digits.length - 1 - n), d));
  }
}
line(ry, 0, 444.5, 16, 444.5, "#999", "1 1");

const cells = Math.ceil(Math.max(width, height) / (STEP / 4)) + 2;
for (const major of [false, true]) {
  const color = major ? "#d8d8d8" : "#eeeeee";
  for (let i = 1; i <= cells; i++) {
    if ((i % 8 === 0) !== major) continue;
    const x = half(ZERO_X + i * STEP / 4);
    const y = half(ZERO_Y + i * STEP / 4);
    line(grid, x, 0, x, height, color);
    if (y > 0) {
      line(grid, 24, y, width, y, color);
      line(grid, 0, y, 23, y, "#a4a4a4");
    }
  }
}
```
